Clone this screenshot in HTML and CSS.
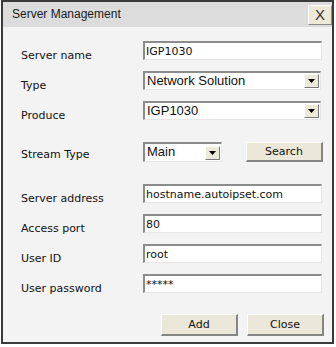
FILE: index.html
```html
<!DOCTYPE html>
<html>
<head>
<title>Server Management</title>
<link rel="stylesheet" href="styles.css">
</head>
<body>

<div class="window">
  <div class="titlebar">
    <span class="title">Server Management</span>
    <button class="close-x">X</button>
  </div>

  <form class="panel">
    <div class="row">
      <label>Server name</label>
      <input class="text" type="text" value="IGP1030">
    </div>

    <div class="row">
      <label>Type</label>
      <div class="select wide">
        <span class="value">Network Solution</span>
        <span class="arrow"><svg width="7" height="4" viewBox="0 0 7 4"><path d="M0 0H7L3.5 4Z" fill="#000"/></svg></span>
      </div>
    </div>

    <div class="row">
      <label>Produce</label>
      <div class="select wide">
        <span class="value">IGP1030</span>
        <span class="arrow"><svg width="7" height="4" viewBox="0 0 7 4"><path d="M0 0H7L3.5 4Z" fill="#000"/></svg></span>
      </div>
    </div>

    <div class="row stream sep">
      <label>Stream Type</label>
      <div class="select short">
        <span class="value">Main</span>
        <span class="arrow"><svg width="7" height="4" viewBox="0 0 7 4"><path d="M0 0H7L3.5 4Z" fill="#000"/></svg></span>
      </div>
      <button type="button" class="btn search">Search</button>
    </div>

    <div class="row sep">
      <label>Server address</label>
      <input class="text" type="text" value="hostname.autoipset.com">
    </div>

    <div class="row">
      <label>Access port</label>
      <input class="text" type="text" value="80">
    </div>

    <div class="row">
      <label>User ID</label>
      <input class="text" type="text" value="root">
    </div>

    <div class="row">
      <label>User password</label>
      <input class="text" type="text" value="*****">
    </div>

    <div class="actions">
      <button type="button" class="btn">Add</button>
      <button type="button" class="btn">Close</button>
    </div>
  </form>
</div>

</body>
</html>
```

FILE: styles.css
```css
body {
  margin: 0;
  background-color: #fff;
}

.window {
  box-sizing: border-box;
  width: 333px;
  height: 344px;
  margin-left: 1px;
  border: 2px solid #3a3a3a;
  background-color: #f3f3f3;
  font-family: "DejaVu Sans", Verdana, sans-serif;
  font-size: 11px;
  color: #111;
}

.titlebar {
  display: flex;
  justify-content: space-between;
  align-items: center;
  height: 25px;
  padding-left: 9px;
  background-color: #dcdcdc;
}

.title {
  font-family: "Liberation Sans", Arial, sans-serif;
  font-size: 12px;
  color: #1a1a1a;
  padding-bottom: 2px;
}

.close-x {
  width: 24px;
  height: 20px;
  padding: 0;
  background-color: #ece9d8;
  border: 1px solid;
  border-color: #fff #8a8a8a #8a8a8a #fff;
  font-family: "Liberation Sans", Arial, sans-serif;
  font-size: 15px;
  color: #333;
}

.panel {
  margin: 0;
  padding: 14px 8px 0 18px;
}

.row {
  display: flex;
  align-items: flex-end;
  height: 19px;
  margin-top: 11px;
}

.row:first-child {
  margin-top: 0;
}

.row.sep {
  margin-top: 22px;
}

.row.stream {
  height: 20px;
}

.row label {
  flex: 0 0 122px;
  line-height: 13px;
  margin-bottom: -2px;
}

.row.stream label {
  margin-bottom: 1px;
}

.text {
  box-sizing: border-box;
  width: 179px;
  height: 19px;
  margin: 0;
  padding: 0 0 0 1px;
  border-style: solid;
  border-width: 2px 1px 1px 2px;
  border-color: #8c8c8c #e6e6e6 #e6e6e6 #8c8c8c;
  background-color: #fff;
  font-family: "DejaVu Sans", Verdana, sans-serif;
  font-size: 11px;
  color: #111;
  outline: none;
}

.select {
  box-sizing: border-box;
  display: flex;
  justify-content: space-between;
  align-items: flex-start;
  height: 19px;
  padding: 0 1px 1px 2px;
  border-style: solid;
  border-width: 2px 1px 1px 2px;
  border-color: #8c8c8c #e6e6e6 #e6e6e6 #8c8c8c;
  background-color: #fff;
  font-family: "Liberation Sans", Arial, sans-serif;
  font-size: 13px;
}

.select.wide {
  width: 178px;
}

.select.short {
  width: 79px;
  height: 20px;
}

.select .value {
  line-height: 15px;
}

.select .arrow {
  box-sizing: border-box;
  display: flex;
  align-items: center;
  justify-content: center;
  width: 15px;
  height: 14px;
  align-self: flex-end;
  background-color: #ece9d8;
  border: 1px solid;
  border-color: #fff #7a7a7a #7a7a7a #fff;
}

.btn {
  box-sizing: border-box;
  width: 77px;
  height: 22px;
  padding: 0;
  background-color: #ebe8d9;
  border-style: solid;
  border-width: 1px 2px 2px 1px;
  border-color: #fff #858585 #858585 #fff;
  font-family: "DejaVu Sans", Verdana, sans-serif;
  font-size: 11px;
  color: #111;
}

.btn.search {
  height: 20px;
  margin-left: 24px;
}

.actions {
  display: flex;
  justify-content: flex-end;
  gap: 9px;
  margin-top: 21px;
}
```
